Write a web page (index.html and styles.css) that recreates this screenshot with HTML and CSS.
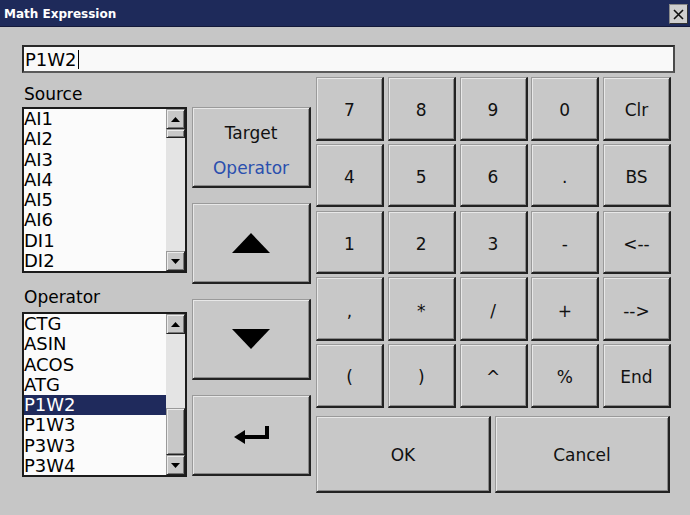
FILE: index.html
```html
<!DOCTYPE html>
<html>
<head>
<meta charset="utf-8">
<link rel="stylesheet" href="styles.css">
</head>
<body>
<div class="window">
  <div class="titlebar">
    <span class="title">Math Expression</span>
    <span class="close"><svg width="13" height="13" viewBox="0 0 13 13"><path d="M2 2 L11 11 M11 2 L2 11" stroke="#111" stroke-width="1.6"/></svg></span>
  </div>
  <div class="content">
    <div class="expr">P1W2<span class="caret"></span></div>
    <div class="main">
      <div class="leftcol">
        <div class="label">Source</div>
        <div class="listbox src">
          <div class="items">
            <div class="item">AI1</div>
            <div class="item">AI2</div>
            <div class="item">AI3</div>
            <div class="item">AI4</div>
            <div class="item">AI5</div>
            <div class="item">AI6</div>
            <div class="item">DI1</div>
            <div class="item">DI2</div>
          </div>
          <div class="scrollbar">
            <div class="sbtn"><svg width="9" height="5" viewBox="0 0 9 5"><path d="M0 5 L4.5 0 L9 5 Z" fill="#000"/></svg></div>
            <div class="thumb small"></div>
            <div class="track"></div>
            <div class="sbtn"><svg width="9" height="5" viewBox="0 0 9 5"><path d="M0 0 L4.5 5 L9 0 Z" fill="#000"/></svg></div>
          </div>
        </div>
        <div class="label op">Operator</div>
        <div class="listbox opl">
          <div class="items">
            <div class="item">CTG</div>
            <div class="item">ASIN</div>
            <div class="item">ACOS</div>
            <div class="item">ATG</div>
            <div class="item sel">P1W2</div>
            <div class="item">P1W3</div>
            <div class="item">P3W3</div>
            <div class="item">P3W4</div>
          </div>
          <div class="scrollbar">
            <div class="sbtn"><svg width="9" height="5" viewBox="0 0 9 5"><path d="M0 5 L4.5 0 L9 5 Z" fill="#000"/></svg></div>
            <div class="track op-track"></div>
            <div class="thumb big"></div>
            <div class="sbtn"><svg width="9" height="5" viewBox="0 0 9 5"><path d="M0 0 L4.5 5 L9 0 Z" fill="#000"/></svg></div>
          </div>
        </div>
      </div>
      <div class="midcol">
        <div class="btn tall target"><span>Target</span><span class="blue">Operator</span></div>
        <div class="btn tall"><svg width="38" height="20" viewBox="0 0 38 20"><path d="M0 20 L19 0 L38 20 Z" fill="#000"/></svg></div>
        <div class="btn tall"><svg width="38" height="20" viewBox="0 0 38 20"><path d="M0 0 L19 20 L38 0 Z" fill="#000"/></svg></div>
        <div class="btn tall"><svg width="37" height="20" viewBox="0 0 37 20"><path d="M1 12 L12 5 L12 19 Z" fill="#000"/><rect x="11" y="10" width="25" height="4" fill="#000"/><rect x="32" y="1" width="4" height="13" fill="#000"/></svg></div>
      </div>
      <div class="rightcol">
        <div class="keypad">
          <div class="btn key">7</div>
          <div class="btn key">8</div>
          <div class="btn key">9</div>
          <div class="btn key">0</div>
          <div class="btn key">Clr</div>
          <div class="btn key">4</div>
          <div class="btn key">5</div>
          <div class="btn key">6</div>
          <div class="btn key">.</div>
          <div class="btn key">BS</div>
          <div class="btn key">1</div>
          <div class="btn key">2</div>
          <div class="btn key">3</div>
          <div class="btn key">-</div>
          <div class="btn key">&lt;--</div>
          <div class="btn key">,</div>
          <div class="btn key">*</div>
          <div class="btn key">/</div>
          <div class="btn key">+</div>
          <div class="btn key">--&gt;</div>
          <div class="btn key">(</div>
          <div class="btn key">)</div>
          <div class="btn key">^</div>
          <div class="btn key">%</div>
          <div class="btn key">End</div>
        </div>
        <div class="actions">
          <div class="btn action">OK</div>
          <div class="btn action">Cancel</div>
        </div>
      </div>
    </div>
  </div>
</div>
</body>
</html>
```
FILE: styles.css
```css
* { box-sizing: border-box; }
html, body { margin: 0; padding: 0; }
body {
  width: 690px;
  height: 515px;
  overflow: hidden;
  background: #c6c6c6;
  font-family: "DejaVu Sans", "Liberation Sans", sans-serif;
  color: #111;
}
.window {
  width: 690px;
  height: 515px;
  background: #c6c6c6;
}
.titlebar {
  height: 27px;
  background: #1e2a5a;
  border-bottom: 1px solid #14193a;
  display: flex;
  align-items: flex-start;
  justify-content: space-between;
  padding: 0 2px 0 4px;
}
.title {
  color: #fff;
  font-weight: bold;
  font-size: 12px;
  line-height: 26px;
  margin-top: 1px;
}
.close {
  width: 19px;
  height: 20px;
  margin-top: 4px;
  background: #cfcfcf;
  border: 1px solid #8a8a8a;
  border-right-color: #333;
  border-bottom-color: #333;
  display: flex;
  align-items: center;
  justify-content: center;
}
.content {
  padding: 18px 0 0 22px;
}
.expr {
  width: 653px;
  height: 28px;
  background: #f9f9f9;
  border-top: 2px solid #2a2a2a;
  border-left: 2px solid #2a2a2a;
  border-right: 2px solid #4a4a4a;
  border-bottom: 2px solid #5a5a5a;
  font-size: 18px;
  line-height: 24px;
  padding-left: 1px;
  padding-top: 1px;
  display: flex;
  align-items: center;
  color: #000;
}
.caret {
  display: inline-block;
  width: 1px;
  height: 19px;
  background: #000;
  margin-left: 1px;
}
.main {
  display: flex;
  align-items: flex-start;
  margin-top: 4px;
}
.leftcol {
  width: 165px;
  display: flex;
  flex-direction: column;
}
.label {
  font-size: 17px;
  line-height: 20px;
  height: 20px;
  margin-top: 7px;
  margin-bottom: 3px;
  padding-left: 2px;
  color: #000;
}
.label.op {
  margin-top: 14px;
  margin-bottom: 5px;
}
.listbox {
  width: 165px;
  border: 2px solid #1c1c1c;
  background: #fbfbfb;
  display: flex;
  overflow: hidden;
}
.listbox.src { height: 166px; }
.listbox.opl { height: 165px; }
.items {
  width: 142px;
  overflow: hidden;
}
.item {
  height: 20.25px;
  line-height: 20.25px;
  font-size: 18px;
  color: #000;
  padding-left: 0;
  white-space: nowrap;
}
.item.sel {
  background: #1f2a5c;
  color: #fff;
}
.scrollbar {
  width: 19px;
  display: flex;
  flex-direction: column;
  flex: none;
}
.sbtn, .thumb {
  background: #c8c8c8;
  border: 1px solid #9a9a9a;
  border-right-color: #222;
  border-bottom-color: #222;
  box-shadow: inset 1px 1px 0 #ececec, inset -1px -1px 0 #777;
}
.sbtn {
  height: 20px;
  flex: none;
  display: flex;
  align-items: center;
  justify-content: center;
}
.thumb.small { height: 9px; flex: none; }
.thumb.big { height: 47px; flex: none; }
.track {
  flex: 1;
  background: #e4e4e4;
}
.midcol {
  width: 119px;
  margin-left: 5px;
  padding-top: 30px;
  display: flex;
  flex-direction: column;
  gap: 15px;
}
.btn {
  background: #c8c8c8;
  border: 1px solid #9a9a9a;
  border-right: 2px solid #222;
  border-bottom: 2px solid #222;
  box-shadow: inset 1px 1px 0 #e8e8e8, inset -1px -1px 0 #8a8a8a;
  display: flex;
  align-items: center;
  justify-content: center;
  font-size: 17px;
  color: #111;
}
.btn.tall {
  height: 81px;
}
.target {
  flex-direction: column;
  gap: 15px;
  padding-top: 6px;
}
.blue {
  color: #2a4fae;
}
.rightcol {
  margin-left: 5px;
  width: 355px;
  display: flex;
  flex-direction: column;
}
.keypad {
  display: grid;
  grid-template-columns: repeat(5, 68px);
  grid-auto-rows: 63.5px;
  column-gap: 3.75px;
  row-gap: 3.25px;
}
.key {
  font-size: 17px;
  padding-top: 4px;
}
.actions {
  display: grid;
  grid-template-columns: 175px 175px;
  column-gap: 4px;
  margin-top: 8px;
}
.action {
  height: 77px;
  padding-top: 2px;
}
```
